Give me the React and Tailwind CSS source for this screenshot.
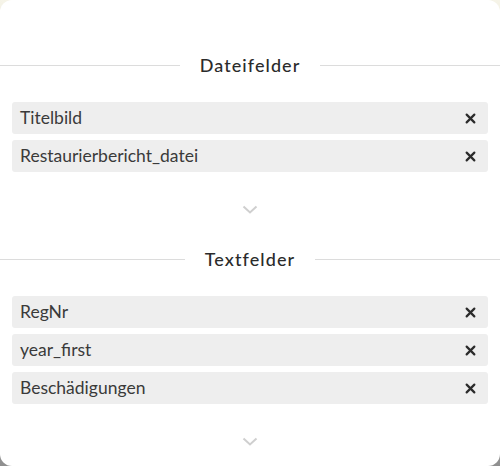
import React from 'react';

const dateiFelder = ['Titelbild', 'Restaurierbericht_datei'];
const textFelder = ['RegNr', 'year_first', 'Beschädigungen'];

const Heading = ({ title }) => (
  <div className="flex items-center gap-5">
    <div className="h-px flex-1 bg-[#dcdcdc]" />
    <h2 className="text-[18px] font-medium leading-5 tracking-[0.06em] text-[#2b2b2b]">{title}</h2>
    <div className="h-px flex-1 bg-[#dcdcdc]" />
  </div>
);

const FieldRow = ({ name }) => (
  <div className="flex h-8 items-center justify-between rounded-[3px] bg-[#eeeeee] pl-2 pr-3">
    <span className="text-[17.5px] text-[#3a3a3a]">{name}</span>
    <svg width="11" height="11" viewBox="0 0 10 10" className="text-[#2b2b2b]">
      <path d="M1.5 1.5 L8.5 8.5 M8.5 1.5 L1.5 8.5" stroke="currentColor" strokeWidth="2" strokeLinecap="round" />
    </svg>
  </div>
);

const Chevron = () => (
  <div className="flex justify-center">
    <svg width="16" height="10" viewBox="0 0 16 10">
      <path d="M1.5 1.5 L8 7.5 L14.5 1.5" fill="none" stroke="#cfcfcf" strokeWidth="2" />
    </svg>
  </div>
);

const Section = ({ title, fields }) => (
  <div>
    <Heading title={title} />
    <div className="mt-[27px] flex flex-col gap-[6px] px-3">
      {fields.map((f) => (
        <FieldRow key={f} name={f} />
      ))}
    </div>
    <div className="mt-[33px]">
      <Chevron />
    </div>
  </div>
);

export default function App() {
  return (
    <div className="h-[466px] w-[500px] bg-gradient-to-b from-[#f6f4e8] to-[#8f8f8f]" style={{ fontFamily: 'Lato, "Open Sans", sans-serif' }}>
      <div className="flex h-full flex-col gap-[34px] rounded-[12px] bg-white pt-[55px]">
        <Section title="Dateifelder" fields={dateiFelder} />
        <Section title="Textfelder" fields={textFelder} />
      </div>
    </div>
  );
}
